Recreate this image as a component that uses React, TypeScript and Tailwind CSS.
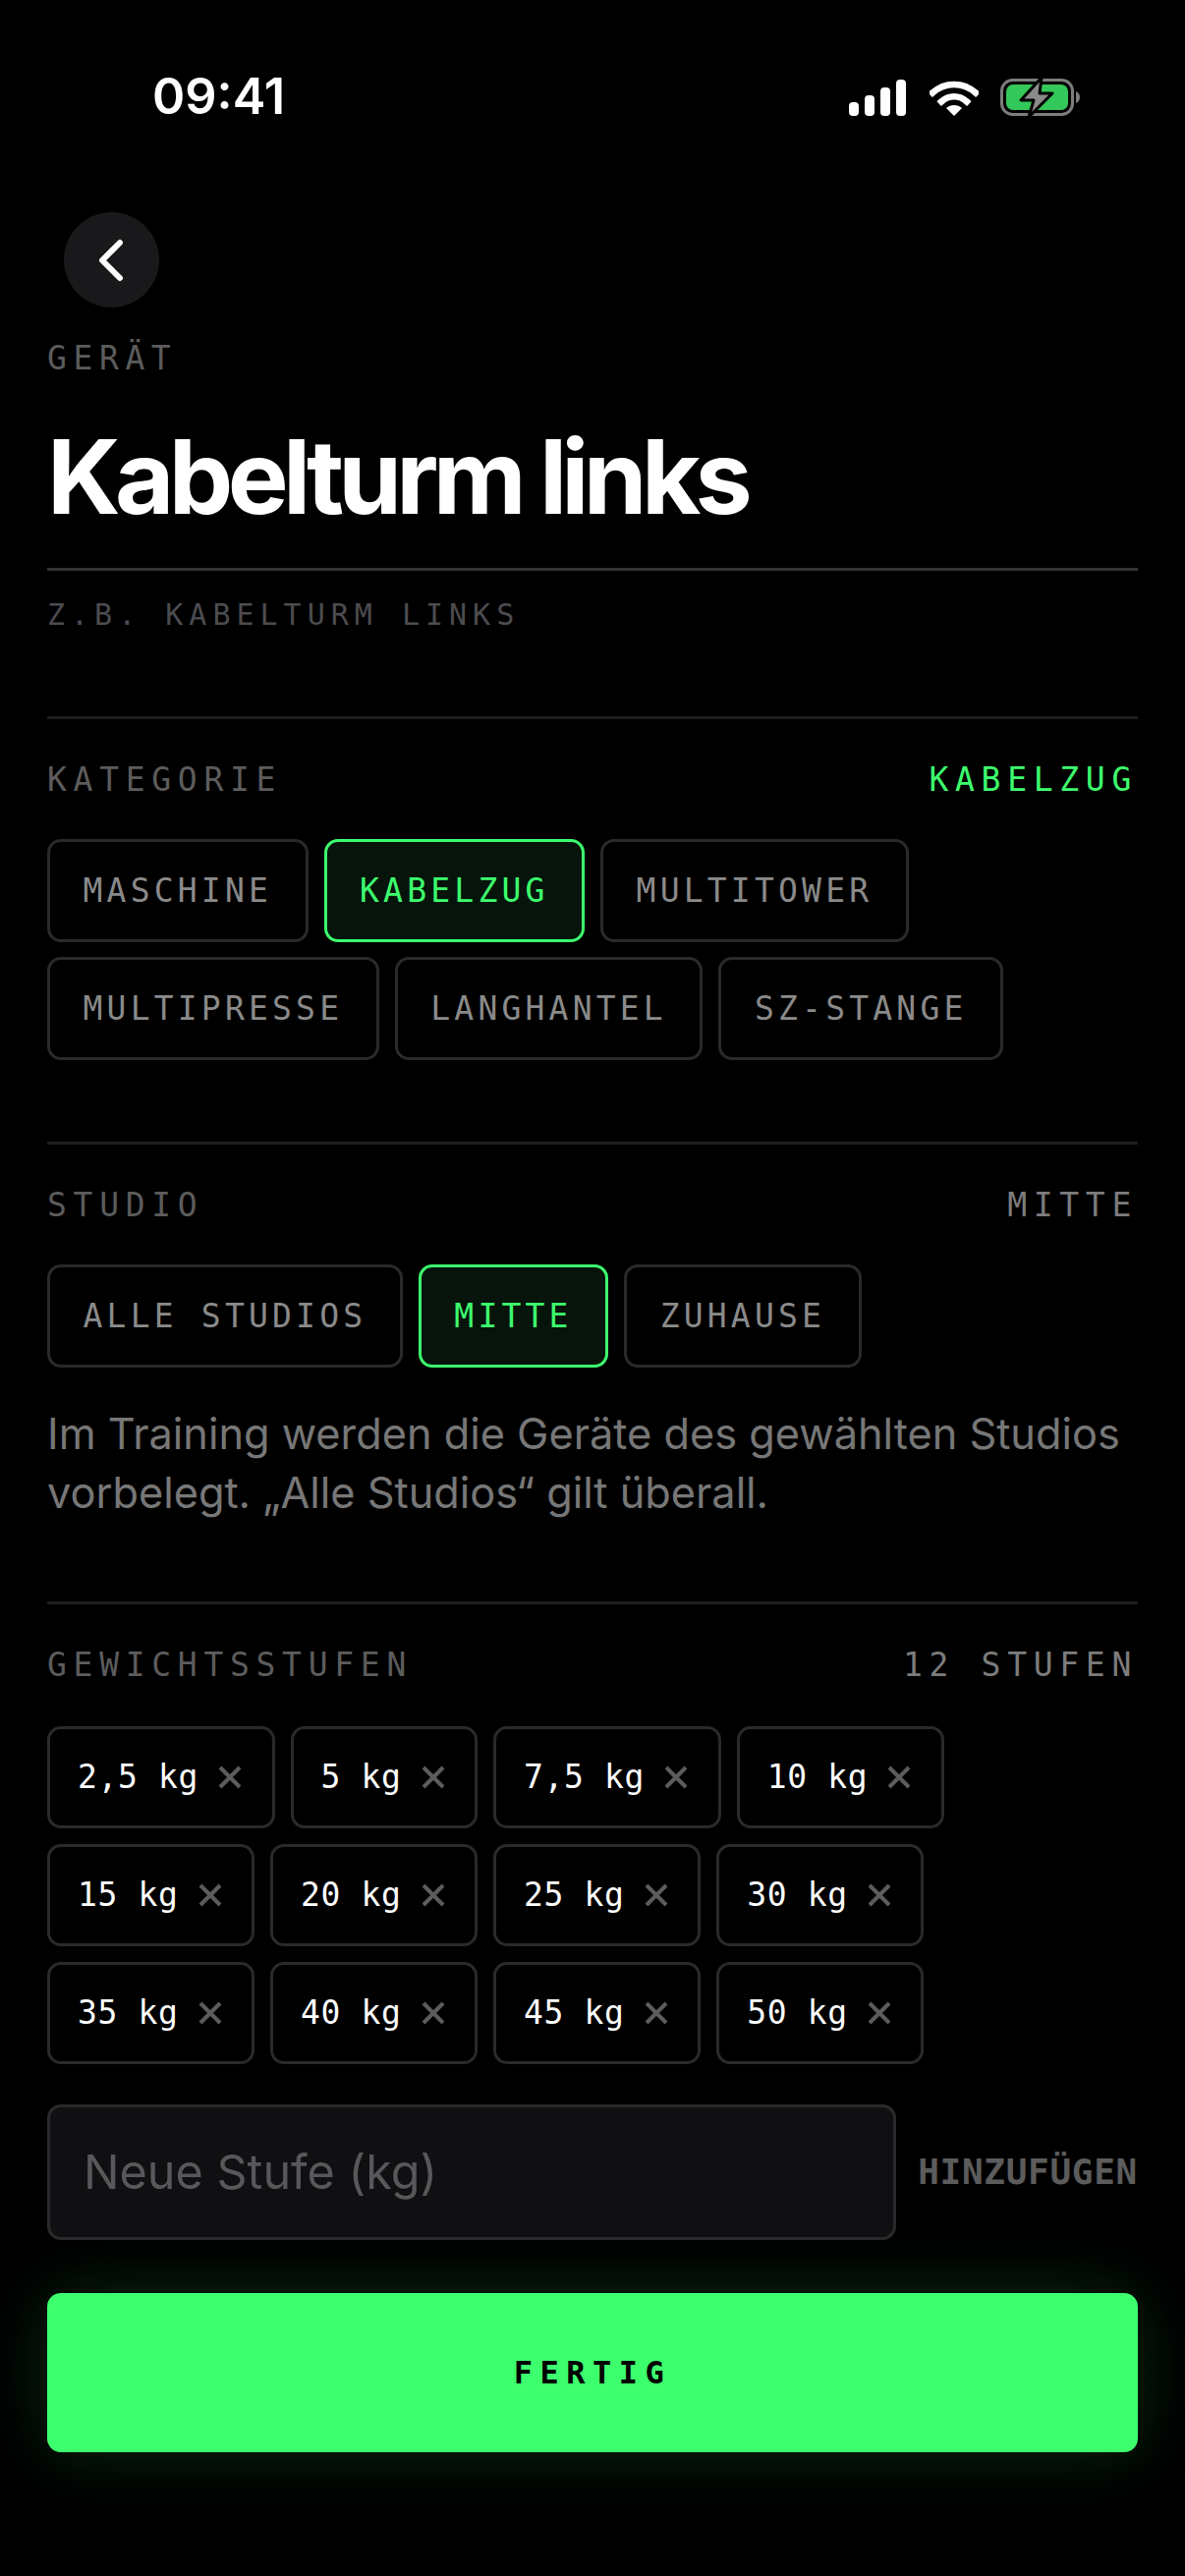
const categories = ['MASCHINE', 'KABELZUG', 'MULTITOWER', 'MULTIPRESSE', 'LANGHANTEL', 'SZ-STANGE'];
const studios = ['ALLE STUDIOS', 'MITTE', 'ZUHAUSE'];
const steps = ['2,5 kg', '5 kg', '7,5 kg', '10 kg', '15 kg', '20 kg', '25 kg', '30 kg', '35 kg', '40 kg', '45 kg', '50 kg'];

function SignalIcon() {
  return (
    <svg className="mr-[2px]" width="58" height="37" viewBox="0 0 58 37" fill="#fff" aria-hidden="true">
      <rect x="0" y="23" width="10" height="14" rx="4" />
      <rect x="16" y="16" width="10" height="21" rx="4" />
      <rect x="32" y="8" width="10" height="29" rx="4" />
      <rect x="48" y="0" width="10" height="37" rx="4" />
    </svg>
  );
}

function WifiIcon() {
  return (
    <svg width="50" height="37" viewBox="0 0 50 37" fill="none" aria-hidden="true">
      <path d="M3 13.500C15.500 2 34.500 2 47 13.500" stroke="#fff" strokeWidth="6.500" strokeLinecap="square" />
      <path d="M12 22.500C19.500 15.500 30.500 15.500 38 22.500" stroke="#fff" strokeWidth="6.500" strokeLinecap="square" />
      <path d="M25 37L17 29C21.500 25 28.500 25 33 29Z" fill="#fff" />
    </svg>
  );
}

function BatteryIcon() {
  return (
    <svg width="82" height="42" viewBox="0 0 82 42" fill="none" aria-hidden="true">
      <rect x="1.500" y="3.500" width="72" height="35" rx="11" stroke="#7d7d7d" strokeWidth="3" />
      <rect x="6" y="8" width="63" height="26" rx="7" fill="#34c759" />
      <path d="M77 15C80 16 81 18.500 81 21C81 23.500 80 26 77 27Z" fill="#7d7d7d" />
      <path d="M42 1L21 24H34L29 41L53 17H40Z" fill="#8a8a8a" stroke="#000" strokeWidth="3" strokeLinejoin="round" />
    </svg>
  );
}

function Chip({ label, active }: { label: string; active?: boolean }) {
  return (
    <div
      className={
        active
          ? 'h-[105px] flex items-center px-[33.500px] rounded-[14px] border-[3px] border-[#3dff6e] bg-[#07140b] text-[#3dff6e] text-[33px] tracking-[4.200px] whitespace-pre'
          : 'h-[105px] flex items-center px-[33.500px] rounded-[14px] border-[3px] border-[#2a2a2c] text-[#8a8a8a] text-[33px] tracking-[4.200px] whitespace-pre'
      }
    >
      {label}
    </div>
  );
}

function SectionHead({ title, value, green }: { title: string; value: string; green?: boolean }) {
  return (
    <div className="flex items-center justify-between h-[40px] text-[33px] tracking-[6.700px]">
      <span className="text-[#5c5c5c]">{title}</span>
      <span className={green ? 'text-[#3dff6e]' : 'text-[#7c7c7c]'}>{value}</span>
    </div>
  );
}

export default function App() {
  return (
    <div className="w-[1206px] h-[2622px] bg-black overflow-hidden font-['DejaVu_Sans_Mono',monospace]">
      {/* Status bar */}
      <div className="h-[194px] flex items-start justify-between pt-[70px] pl-[155px] pr-[106px]">
        <span className="font-['Inter',sans-serif] text-[50.500px] leading-[56px] font-semibold text-white">09:41</span>
        <div className="flex items-center gap-[22px] pt-[8px]">
          <SignalIcon />
          <WifiIcon />
          <BatteryIcon />
        </div>
      </div>

      <div className="px-[48px]">
        <div className="w-[97px] h-[97px] ml-[17px] mt-[22px] rounded-full bg-[#19191b] flex items-center justify-center">
          <svg className="-ml-[2px]" width="34" height="44" viewBox="0 0 34 44" fill="none" aria-hidden="true">
            <path d="M26 4L8 22L26 40" stroke="#fff" strokeWidth="6" strokeLinecap="round" strokeLinejoin="round" />
          </svg>
        </div>

        <div className="mt-[32px] h-[40px] flex items-center text-[#5c5c5c] text-[33px] tracking-[6.600px]">GERÄT</div>

        <h1 className="mt-[47px] h-[106px] font-['Inter',sans-serif] font-bold text-white text-[104px] leading-[106px] tracking-[-5.700px] whitespace-pre">
          Kabelturm links
        </h1>

        <div className="mt-[40px] border-t-[3px] border-[#333335] pt-[27px] h-[151px] text-[#4c4c4f] text-[30px] leading-[36px] tracking-[6px]">
          Z.B. KABELTURM LINKS
        </div>

        {/* Kategorie */}
        <div className="border-t-[3px] border-[#1d1d1f] pt-[42px] h-[433px]">
          <SectionHead title="KATEGORIE" value="KABELZUG" green />
          <div className="mt-[40px] flex flex-wrap gap-x-[16px] gap-y-[15px]">
            {categories.map((c) => (
              <Chip key={c} label={c} active={c === 'KABELZUG'} />
            ))}
          </div>
        </div>

        {/* Studio */}
        <div className="border-t-[3px] border-[#1d1d1f] pt-[42px] h-[468px]">
          <SectionHead title="STUDIO" value="MITTE" />
          <div className="mt-[40px] flex flex-wrap gap-x-[16px] gap-y-[15px]">
            {studios.map((s) => (
              <Chip key={s} label={s} active={s === 'MITTE'} />
            ))}
          </div>
          <p className="mt-[37px] font-['Inter',sans-serif] text-[43.300px] leading-[60px] text-[#777777]">
            Im Training werden die Geräte des gewählten Studios
            <br />
            vorbelegt. „Alle Studios“ gilt überall.
          </p>
        </div>

        {/* Gewichtsstufen */}
        <div className="border-t-[3px] border-[#1d1d1f] pt-[42px]">
          <SectionHead title="GEWICHTSSTUFEN" value="12 STUFEN" />
          <div className="mt-[42px] flex flex-wrap gap-x-[16px] gap-y-[16px]">
            {steps.map((s) => (
              <div
                key={s}
                className="h-[104px] flex items-center pl-[28px] pr-[30.500px] gap-[20px] rounded-[14px] border-[3px] border-[#2a2a2c] text-white text-[33px] tracking-[0.640px] whitespace-pre"
              >
                {s}
                <svg width="24" height="24" viewBox="0 0 24 24" fill="none" aria-hidden="true">
                  <path d="M2 2L22 22M22 2L2 22" stroke="#5c5c5c" strokeWidth="4" />
                </svg>
              </div>
            ))}
          </div>

          <div className="mt-[41px] flex items-center justify-between">
            <div className="w-[864px] h-[138px] flex items-center pl-[34px] rounded-[14px] border-[3px] border-[#2a2a2c] bg-[#101012] font-['Inter',sans-serif] text-[48.500px] text-[#58585b]">
              Neue Stufe (kg)
            </div>
            <span className="text-[#5c5c5c] text-[36px] font-bold tracking-[0.700px] whitespace-pre">HINZUFÜGEN</span>
          </div>

          <div className="mt-[54px] h-[162px] flex items-center justify-center rounded-[14px] bg-[#3dff6e] shadow-[0_0_70px_rgba(61,255,110,0.16)] text-black text-[32px] font-bold tracking-[7.500px]">
            FERTIG
          </div>
        </div>
      </div>
    </div>
  );
}
